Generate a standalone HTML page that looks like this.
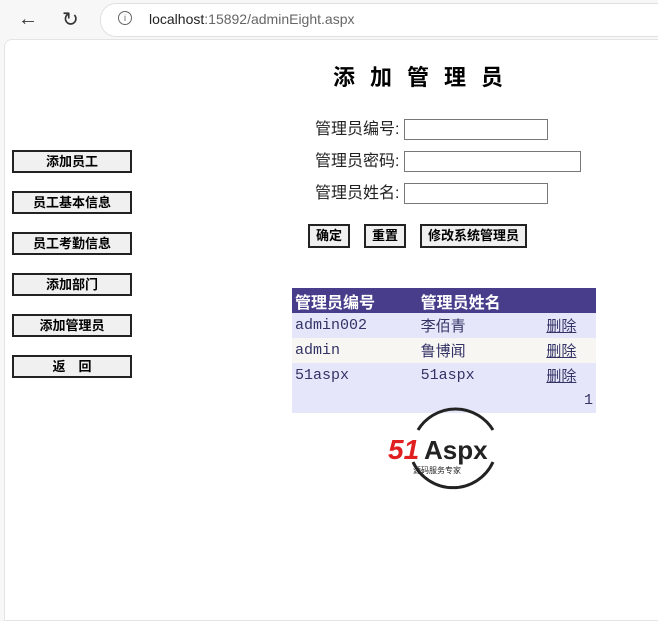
<html><head><style>
body{margin:0;width:658px;height:606px;background:#f7f7f7;font-family:"Liberation Sans","Noto Sans CJK SC",sans-serif;position:relative;overflow:hidden}
.page{position:absolute;left:4px;top:39px;width:660px;height:580px;background:#fff;border-radius:8px 0 0 0;border:1px solid #e4e4e4}
.a{position:absolute}
.lb{position:absolute;left:12px;width:116px;height:19px;border:2px solid #222;background:#f0f0f0;font-size:13px;font-weight:bold;text-align:center;line-height:19px}
.btn{position:absolute;top:224px;height:20px;border:2px solid #222;background:#f0f0f0;font-size:13px;font-weight:bold;text-align:center;line-height:20px}
.lab{position:absolute;left:315px;font-size:16px;color:#222;line-height:20px}
.in{position:absolute;left:404px;height:19px;border:1px solid #777;background:#fff}
td{padding:0 3px;font-size:15px;height:25px}
</style></head><body>
<div class="a" style="left:18px;top:8px;font-size:20px;color:#333">←</div>
<div class="a" style="left:62px;top:7px;font-size:20px;color:#333">↻</div>
<div class="a" style="left:100px;top:3px;width:570px;height:32px;border-radius:16px;background:#fff;border:1px solid #e0e0e0"></div>
<div class="a" style="left:118px;top:11px;width:12px;height:12px;border:1.5px solid #666;border-radius:50%;font-size:9px;text-align:center;line-height:12px;color:#666">i</div>
<div class="a" style="left:149px;top:11px;font-size:14px;color:#222">localhost<span style="color:#666">:15892/adminEight.aspx</span></div>
<div class="page"></div>
<div class="a" style="left:333px;top:60px;font-size:22px;font-weight:bold;letter-spacing:15px">添加管理员</div>
<div class="lab" style="top:120px">管理员编号:</div><div class="in" style="top:119px;width:142px"></div>
<div class="lab" style="top:152px">管理员密码:</div><div class="in" style="top:151px;width:175px"></div>
<div class="lab" style="top:184px">管理员姓名:</div><div class="in" style="top:183px;width:142px"></div>
<div class="btn" style="left:308px;width:38px">确定</div>
<div class="btn" style="left:364px;width:38px">重置</div>
<div class="btn" style="left:420px;width:103px">修改系统管理员</div>
<div class="lb" style="top:150px">添加员工</div>
<div class="lb" style="top:191px">员工基本信息</div>
<div class="lb" style="top:232px">员工考勤信息</div>
<div class="lb" style="top:273px">添加部门</div>
<div class="lb" style="top:314px">添加管理员</div>
<div class="lb" style="top:355px">返　回</div>
<table class="a" style="left:292px;top:288px;width:304px;border-collapse:collapse;font-family:'Liberation Mono','Noto Sans CJK SC',monospace;color:#333366">
<tr style="background:#483D8B;color:#fff;font-weight:bold;font-family:'Liberation Sans','Noto Sans CJK SC',sans-serif"><td style="height:24px;font-size:16px">管理员编号</td><td style="font-size:16px">管理员姓名</td><td></td></tr>
<tr style="background:#E6E6FA"><td>admin002</td><td>李佰青</td><td><u>删除</u></td></tr>
<tr style="background:#F7F6F3"><td>admin</td><td>鲁博闻</td><td><u>删除</u></td></tr>
<tr style="background:#E6E6FA"><td>51aspx</td><td>51aspx</td><td><u>删除</u></td></tr>
<tr style="background:#E6E6FA"><td></td><td></td><td style="text-align:right">1</td></tr>
</table>
<svg class="a" style="left:388px;top:400px" width="130" height="95"><path d="M30 30 A44 44 0 0 1 105 30" stroke="#222" stroke-width="3" fill="none"/><path d="M105 62 A44 44 0 0 1 25 62" stroke="#222" stroke-width="3" fill="none"/>
<text x="0" y="59" font-size="28" font-weight="bold" font-style="italic" fill="#e02020" font-family="Liberation Sans">51</text>
<text x="36" y="59" font-size="26" font-weight="bold" fill="#222" font-family="Liberation Sans">Aspx</text>
<text x="25" y="73" font-size="8" fill="#222" font-family="Noto Sans CJK SC">源码服务专家</text></svg>
</body></html>
